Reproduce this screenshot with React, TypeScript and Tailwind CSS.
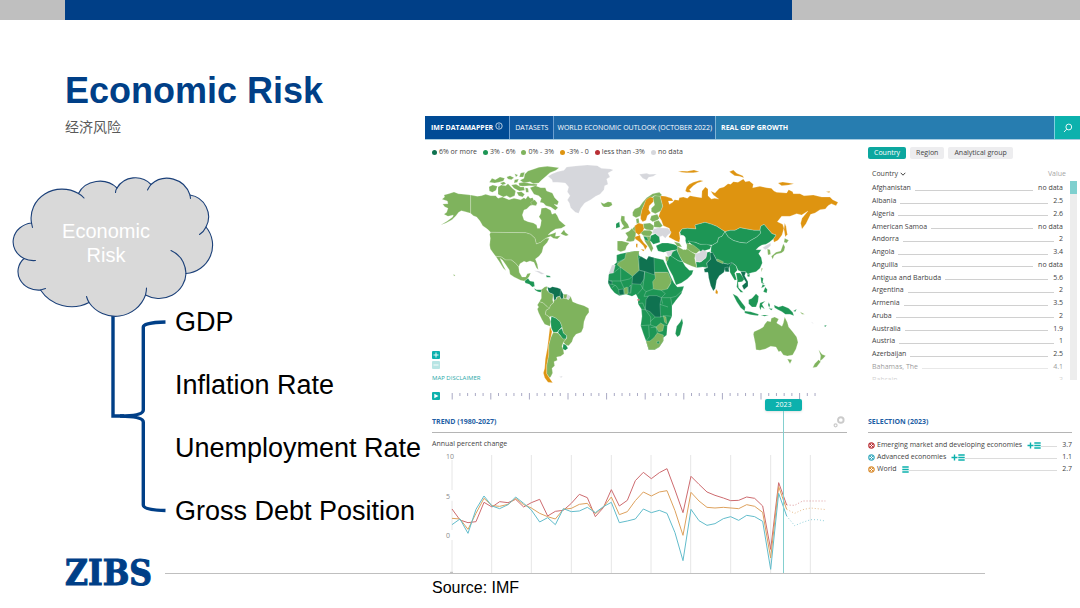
import React from "react";

const INDICATORS = ["GDP", "Inflation Rate", "Unemployment Rate", "Gross Debt Position"];

const LEGEND = [
  { label: "6% or more", dot: "bg-[#0f7250]" },
  { label: "3% - 6%", dot: "bg-[#1d9655]" },
  { label: "0% - 3%", dot: "bg-[#7fb35d]" },
  { label: "-3% - 0", dot: "bg-[#de9410]" },
  { label: "less than -3%", dot: "bg-[#b92f35]" },
  { label: "no data", dot: "bg-[#d6d7dc]" },
];

const COUNTRIES: [string, string][] = [
  ["Afghanistan", "no data"],
  ["Albania", "2.5"],
  ["Algeria", "2.6"],
  ["American Samoa", "no data"],
  ["Andorra", "2"],
  ["Angola", "3.4"],
  ["Anguilla", "no data"],
  ["Antigua and Barbuda", "5.6"],
  ["Argentina", "2"],
  ["Armenia", "3.5"],
  ["Aruba", "2"],
  ["Australia", "1.9"],
  ["Austria", "1"],
  ["Azerbaijan", "2.5"],
  ["Bahamas, The", "4.1"],
  ["Bahrain", "3"],
];

const SELECTION = [
  { name: "Emerging market and developing economies", value: "3.7", color: "#b92f35", plus: true },
  { name: "Advanced economies", value: "1.1", color: "#35a9bd", plus: true },
  { name: "World", value: "2.7", color: "#d98a2b", plus: false },
];

const DARK = "#0f7250";
const GREEN = "#1d9655";
const LIGHT = "#7fb35d";
const ORANGE = "#de9410";
const GREY = "#d6d7dc";

// [fill, outline] on a grid of three units per pixel
const AMERICAS: [string, string][] = [
  // Alaska
  [LIGHT, "90,111 103,116 120,118 140,120 140,175 124,170 112,167 104,172 96,182 84,194 66,204 50,210 70,198 86,186 88,180 72,184 60,178 68,172 72,160 62,155 56,147 72,146 70,138 54,133 62,126 60,120 74,116"],
  // Canada
  [LIGHT, "140,120 160,124 172,122 185,118 200,122 215,122 222,130 235,126 255,134 270,130 290,134 300,128 305,132 312,122 318,130 326,128 335,148 318,152 308,162 300,165 295,180 300,195 312,200 328,204 338,210 340,220 347,220 350,210 352,196 345,185 350,176 352,160 366,158 380,166 384,178 394,174 400,182 406,196 418,206 425,212 412,220 395,222 380,232 372,240 385,236 396,232 394,244 410,242 400,252 388,250 380,244 365,250 350,262 337,267 333,250 320,238 305,233 200,232 190,222 176,212 168,198 158,186 148,182 140,175"],
  // United States
  [LIGHT, "200,232 305,233 320,238 333,250 337,267 350,262 365,250 376,250 370,262 358,275 354,292 345,304 334,312 340,328 343,344 337,338 330,322 318,318 308,322 300,319 288,326 284,336 275,325 262,315 245,315 232,306 215,304 206,292 199,282 197,270 199,250 197,238"],
  // Mexico
  [LIGHT, "215,304 232,306 245,315 262,315 275,325 284,336 286,352 294,366 305,366 310,356 320,354 316,364 308,374 300,378 290,376 270,366 258,358 256,345 246,330 236,316 228,310 236,328 246,347 238,340 226,320"],
  [GREEN, "302,378 312,370 318,378 330,380 332,394 325,396 316,388 304,384"],
  [GREEN, "330,400 338,404 355,404 350,412 342,410 334,406"],
  [GREY, "330,347 345,348 362,357 352,358 340,351"],
  [GREEN, "366,361 378,363 380,367 368,367"],
  // Arctic islands
  [LIGHT, "302,58 312,48 330,42 345,37 370,34 405,38 396,46 378,53 366,64 352,76 344,84 328,86 318,80 300,84 288,76 300,70"],
  [LIGHT, "222,96 232,90 245,92 252,86 265,100 275,108 272,122 258,128 248,122 238,126 222,118"],
  [LIGHT, "195,95 206,90 220,94 216,106 205,112 196,108"],
  [LIGHT, "196,82 204,70 214,74 228,66 242,70 238,78 224,82 212,84"],
  [LIGHT, "248,66 258,62 270,68 262,74 252,72"],
  [LIGHT, "272,74 284,72 280,82 270,84"],
  [LIGHT, "228,84 240,80 246,86 236,90"],
  [LIGHT, "284,84 300,82 322,86 340,88 338,93 316,92 296,94 286,92"],
  [LIGHT, "262,90 276,88 290,96 300,96 302,106 286,108 270,100"],
  [LIGHT, "278,112 292,110 302,118 296,126 284,122"],
  [LIGHT, "304,98 312,100 314,112 306,112"],
  [LIGHT, "318,98 334,92 350,98 364,98 368,108 385,114 392,128 404,140 400,150 390,148 402,158 394,166 380,156 366,152 358,144 348,142 352,130 344,122 330,118"],
  [LIGHT, "320,142 332,134 340,144 336,152 324,150"],
  [LIGHT, "290,54 302,52 298,66 286,66"],
  [LIGHT, "272,56 282,60 276,66"],
  [LIGHT, "410,236 420,224 424,232 434,240 426,243 418,240"],
  // Greenland
  [GREY, "372,64 385,56 400,50 420,46 428,36 455,33 490,30 520,32 532,40 560,42 568,45 552,54 558,66 548,72 552,88 542,92 540,104 528,118 515,124 500,134 482,144 470,160 464,175 454,172 440,158 436,144 430,135 438,122 430,110 434,96 424,84 400,82 386,82 384,74"],
  // Iceland
  [LIGHT, "530,142 540,146 552,140 562,142 565,150 555,156 540,156 534,151"],
  // South America
  [LIGHT, "352,404 362,396 370,394 368,404 374,412 388,418 386,434 388,444 380,450 376,462 366,452 358,444 346,440 352,430"],
  [DARK, "370,396 378,399 385,395 400,398 410,402 414,414 408,424 398,426 396,434 390,436 388,418 374,412"],
  [DARK, "410,404 418,418 418,432 410,432 408,424"],
  [LIGHT, "418,418 430,418 428,432 420,430"],
  [GREY, "430,418 440,424 434,434 428,430"],
  [LIGHT, "390,436 396,434 400,426 408,424 410,432 420,430 428,432 434,434 440,424 446,440 460,446 480,452 494,460 495,472 486,484 480,500 478,518 472,532 456,538 448,548 444,560 434,572 426,570 418,562 428,550 428,542 418,534 414,516 408,500 396,490 384,484 376,486 364,478 366,466 376,460 380,450 388,444"],
  [LIGHT, "346,440 358,444 366,452 376,460 366,466 364,478 376,486 380,500 378,514 362,508 354,494 344,474 340,462 344,456 340,450"],
  [GREEN, "382,484 396,490 408,500 414,516 404,526 400,532 388,532 382,520 380,500"],
  [GREEN, "404,526 414,520 418,534 428,542 426,552 416,552 408,540 402,534"],
  [LIGHT, "388,532 402,534 410,544 418,552 426,552 418,562 414,574 418,584 420,596 410,604 398,606 400,616 390,620 392,632 384,640 386,654 380,666 376,668 368,656 368,630 374,600 374,570 380,548"],
  [GREEN, "418,566 426,570 432,580 424,586 416,582"],
  [ORANGE, "378,514 384,530 380,548 374,570 374,600 368,630 368,656 376,668 386,683 372,682 362,668 358,654 362,640 364,612 370,580 374,548"],
  [GREY, "406,665 416,663 412,668"],
  [LIGHT, "88,358 94,361 90,364"],
];

const EURASIA: [string, string][] = [
  // Russia
  [ORANGE, "180,122 196,124 215,130 220,138 205,138 208,148 218,142 224,134 236,136 238,128 250,126 262,130 270,122 290,126 305,128 306,108 316,96 324,102 324,122 334,132 344,130 356,132 340,120 332,108 345,114 358,100 372,96 384,86 392,88 400,80 414,82 430,72 436,80 448,78 460,88 458,98 480,94 500,98 514,100 522,108 530,112 560,114 566,104 578,110 580,116 600,116 612,122 640,120 665,126 690,126 698,134 714,142 708,152 694,146 684,152 676,162 660,164 645,174 632,178 626,190 618,206 606,222 602,205 606,190 624,168 605,180 590,176 570,184 545,184 532,200 548,208 552,220 546,240 534,256 522,262 520,252 528,240 516,236 504,222 492,208 482,214 480,226 462,226 440,222 420,218 405,226 390,226 375,230 350,214 335,208 315,202 300,206 285,210 288,222 262,220 246,222 238,232 240,250 238,262 228,258 206,246 212,236 208,220 190,212 184,196 176,184 180,172 188,154 184,138"],
  [ORANGE, "256,108 260,96 268,88 280,82 300,76 310,78 292,84 280,92 268,104 274,112 262,112"],
  [ORANGE, "234,50 246,48 262,49 282,45 298,50 280,53 258,53"],
  [ORANGE, "388,50 400,45 410,55 428,62 432,68 418,64 404,62 396,56"],
  [ORANGE, "534,84 548,81 582,86 566,90 545,92"],
  [ORANGE, "678,110 690,109 688,113"],
  [ORANGE, "554,204 558,214 562,238 556,246 552,224"],
  [GREY, "118,58 140,55 148,58 170,57 160,64 146,67 140,75 128,70"],
  // Central Asia
  [GREEN, "240,232 246,222 262,220 288,222 285,210 300,206 315,202 335,208 350,214 375,230 366,244 356,248 352,262 338,270 320,270 300,268 286,262 270,262 262,270 250,262 256,254 244,248"],
  [GREEN, "264,258 286,262 300,268 320,268 334,272 330,282 318,286 308,290 296,288 280,274"],
  [LIGHT, "260,264 280,270 300,286 288,296 276,292 260,282"],
  [GREEN, "375,230 385,246 400,256 420,262 440,264 452,256 470,246 482,234 480,226 482,214 492,208 504,222 516,236 528,240 520,252 508,262 498,268 486,270 476,276 468,284 484,284 476,296 484,308 487,324 480,340 468,350 452,354 444,358 436,350 424,350 414,346 408,332 396,324 384,328 368,324 350,316 342,300 332,290 334,272 352,262 356,248 366,244"],
  [GREEN, "375,230 390,226 405,226 420,218 440,222 462,226 480,226 482,234 470,246 452,256 440,264 420,262 400,256 385,246"],
  // South Asia
  [DARK, "326,294 338,292 344,304 350,316 368,324 384,328 396,322 402,328 388,336 384,352 376,340 372,352 358,362 350,376 346,400 340,408 332,392 326,368 324,352 314,352 312,342 322,338 320,324 332,312"],
  [DARK, "374,338 384,336 388,350 376,350"],
  [LIGHT, "352,312 370,320 368,326 350,318"],
  [GREEN, "288,320 300,322 318,308 320,292 330,290 332,312 320,324 322,338 308,336 290,338"],
  [GREY, "284,298 300,292 308,284 316,288 322,290 318,308 304,320 288,320"],
  [ORANGE, "348,402 354,410 352,418 346,414"],
  // Middle East
  [LIGHT, "230,272 240,278 250,284 262,282 276,292 286,298 284,310 290,338 276,334 262,328 250,322 240,306 232,290"],
  [GREEN, "168,272 186,264 204,264 222,268 232,272 232,284 210,288 190,292 174,288"],
  [LIGHT, "222,260 238,264 246,276 232,274"],
  [GREY, "198,290 220,286 218,298 204,306"],
  [GREEN, "218,290 230,284 240,306 248,320 236,318 212,304"],
  [GREEN, "200,308 212,302 236,318 248,320 256,334 268,346 280,346 276,358 262,372 244,384 228,390 218,362 208,344 200,326"],
  [LIGHT, "196,304 206,306 204,316 198,320"],
  // South-East Asia
  [GREEN, "388,334 396,324 408,332 412,346 404,354 410,374 404,376 398,366 390,352"],
  [GREEN, "408,354 420,354 434,372 426,380 414,382 416,398 430,412 422,412 410,396 412,376"],
  [DARK, "422,350 438,350 434,362 444,380 444,394 432,404 426,392 438,382 428,366"],
  [GREEN, "442,358 450,358 448,366 442,364"],
  [GREEN, "398,416 412,424 424,440 436,456 434,468 422,458 410,440"],
  [GREEN, "434,468 452,470 476,478 474,482 452,479 434,474"],
  [GREEN, "482,480 506,480 494,484"],
  [GREEN, "446,434 456,430 468,416 476,424 474,440 468,456 456,456 446,446"],
  [GREEN, "480,444 496,438 486,448 494,462 484,456 482,466 478,456"],
  [GREEN, "482,366 490,370 488,382 494,388 484,384"],
  [GREEN, "496,396 502,404 500,414 490,410"],
  [GREEN, "488,388 496,392 484,400"],
  [GREEN, "506,442 510,450 508,458 504,450"],
  [GREEN, "506,460 518,461 514,466"],
  [GREEN, "522,450 536,456 548,452 566,460 578,472 582,482 570,478 556,478 546,470 534,464 524,458"],
  [GREEN, "580,468 590,462 586,470"],
  [GREEN, "672,512 680,510 676,516"],
  [LIGHT, "600,470 614,478 606,478"],
  [GREY, "634,500 642,506 636,504"],
  [LIGHT, "484,340 488,340 484,352"],
  [GREY, "488,278 500,270 512,264 512,272 504,280 496,284"],
  [LIGHT, "502,282 510,284 512,298 504,300"],
  [LIGHT, "554,250 566,256 560,264 552,262"],
  [LIGHT, "550,266 555,276 552,288 544,294 530,297 522,302 518,313 514,304 528,292 542,288"],
  // Oceania
  [LIGHT, "460,538 462,530 480,522 490,516 494,508 502,498 512,500 514,490 524,486 536,492 530,504 546,514 550,504 554,486 562,502 566,516 578,530 590,546 594,562 588,582 578,600 562,603 550,600 542,588 536,590 528,576 512,574 496,582 480,586 468,584 466,566"],
  [LIGHT, "562,612 576,614 570,626"],
  [LIGHT, "656,584 666,598 677,602 668,612 660,618 662,602"],
  [LIGHT, "656,614 662,620 650,636 638,638 644,626"],
  // Europe
  [LIGHT, "98,172 104,162 118,156 128,142 140,128 158,116 178,112 186,120 178,126 164,122 150,130 138,138 132,150 126,164 122,182 108,188 98,182"],
  [LIGHT, "158,128 164,122 180,124 184,138 188,154 182,168 166,176 154,170 154,160 164,150"],
  [ORANGE, "122,182 126,164 132,150 138,134 150,126 160,128 160,140 148,152 146,164 152,174 142,182 138,196 128,200 122,192"],
  [LIGHT, "154,182 172,178 178,190 172,196 158,200 150,194"],
  [LIGHT, "108,192 116,190 118,204 110,206"],
  [LIGHT, "64,182 74,184 74,196 84,208 88,218 74,222 62,224 72,214 66,206 62,196"],
  [GREEN, "48,206 58,200 60,216 48,220"],
  [LIGHT, "76,234 88,228 96,220 108,232 106,248 102,258 90,260 78,258 84,246"],
  [LIGHT, "52,258 66,258 88,264 80,274 76,286 62,290 52,286"],
  [LIGHT, "98,220 106,212 108,230 100,226"],
  [ORANGE, "104,212 116,204 130,208 132,220 128,232 116,240 106,232"],
  [LIGHT, "130,206 150,204 162,212 160,226 140,224 132,220"],
  [LIGHT, "122,234 132,226 150,226 158,232 150,244 130,242"],
  [LIGHT, "132,244 150,244 152,262 160,280 154,292 146,276 134,258"],
  [GREEN, "130,244 140,246 146,258 136,256"],
  [ORANGE, "104,246 120,240 122,250 132,264 142,274 136,284 130,272 118,260 106,252"],
  [ORANGE, "122,282 134,284 130,289"],
  [ORANGE, "108,266 113,266 112,278 108,276"],
  [LIGHT, "162,200 176,196 188,212 180,218 162,216"],
  [GREY, "160,222 176,218 204,220 214,232 204,240 196,250 188,242 178,246 168,236 156,236"],
  [GREEN, "152,242 166,236 178,246 180,262 160,268 150,256"],
  // Africa
  [GREEN, "50,300 62,296 92,290 116,288 118,302 140,314 146,304 162,308 190,314 196,326 204,344 214,368 222,384 232,396 252,394 244,416 228,436 216,452 216,484 202,512 200,540 190,548 190,558 178,576 164,584 146,584 138,558 130,536 122,512 126,484 124,462 114,446 114,430 108,418 96,424 78,418 58,422 44,414 32,400 24,384 26,360 36,336 50,322"],
  [LIGHT, "52,330 54,324 74,312 78,294 104,288 118,288 114,304 118,346 98,364"],
  [DARK, "116,312 122,304 140,314 146,304 162,308 164,360 136,350 118,346"],
  [DARK, "98,364 118,346 134,350 132,372 122,388 96,386"],
  [LIGHT, "164,352 204,352 214,376 212,386 202,402 184,406 160,402 158,380 166,370"],
  [DARK, "138,434 146,422 170,422 184,428 180,448 182,486 166,486 150,470 136,464"],
  [GREY, "26,356 36,330 46,330 40,354"],
  [DARK, "24,376 36,378 36,388 26,386"],
  [DARK, "56,404 70,402 72,418 58,420"],
  [LIGHT, "72,400 82,396 84,416 74,418"],
  [DARK, "86,398 92,390 90,414 86,414"],
  [LIGHT, "138,558 150,558 162,548 172,534 190,540 190,558 178,576 164,584 146,584"],
  [GREEN, "170,560 178,558 178,566 172,566"],
  [LIGHT, "168,516 182,504 192,510 188,528 176,530"],
  [LIGHT, "190,482 198,486 200,506 194,502"],
  [GREEN, "246,490 249,504 240,540 232,546 226,536 230,514 240,502"],
  ["#d8666a", "112,432 118,432 118,437 112,437"],
];

const AFRICA_BORDERS =
  "M40 354L62 336V378H30M62 378L88 372 98 364M36 388L48 392 56 404M96 386L92 416M122 388L128 400 112 418M134 350L132 372 128 400 138 410 160 402M164 352L200 352M138 410L132 424 146 424M114 446L128 444 136 464H124M184 406L196 416 184 428 212 428 228 424 246 408M202 402L212 384M204 456L180 448M184 430L188 446M212 428L216 452M180 486L196 482 216 484M136 464L152 486V510L122 512M152 510L168 516M150 500L166 486M146 512L148 545 138 558M152 518L168 516 172 534M192 510L202 512M54 326L50 322 74 312M62 378L72 400M36 398L44 392";

const TREND = [
  {
    color: "#cd6a6e",
    line: "84,207 108,240 132,248 156,245 180,187 204,201 227,185 252,188 275,178 299,201 322,188 347,178 371,228 394,214 418,211 442,190 466,163 490,173 514,230 538,203 562,149 586,198 610,181 634,122 658,97 682,116 706,98 729,86 753,150 777,218 801,109 825,133 849,156 873,166 898,174 920,182 944,181 968,171 992,175 1016,198 1040,328 1064,128 1088,195",
    forecast: "1088,195 1112,196 1136,183 1160,183 1204,183",
  },
  {
    color: "#dda15c",
    line: "84,235 108,237 132,268 156,220 180,175 204,197 227,199 252,193 275,175 299,194 322,204 347,220 371,230 394,237 418,208 442,205 466,193 490,190 514,221 538,201 562,171 586,224 610,215 634,182 658,156 682,168 706,156 729,152 753,212 777,286 801,157 825,183 849,202 873,204 898,202 944,206 968,194 992,199 1016,217 1040,354 1064,140 1088,208",
    forecast: "1088,208 1112,220 1136,209 1160,204 1208,209",
  },
  {
    color: "#61bccb",
    line: "84,254 108,237 132,280 156,208 180,168 204,198 227,206 252,194 275,171 299,190 322,210 347,246 371,233 394,254 418,206 442,215 466,213 490,202 514,218 538,200 562,187 586,248 610,243 634,237 658,207 682,218 706,211 729,220 753,278 777,362 801,208 825,242 849,256 873,251 898,236 920,230 944,241 968,226 992,230 1016,244 1040,388 1064,160 1088,228",
    forecast: "1088,228 1112,257 1136,247 1160,239 1180,239 1204,243",
  },
];

const Cloud: React.FC = () => (
  <div className="relative mt-[35px]">
    <svg viewBox="0 172 215 135" className="block h-[135px] w-[215px] overflow-visible" aria-hidden="true">
      <g stroke="#1b4079" strokeWidth="1.1" strokeLinecap="round">
        <path
          fill="#d9d9d9"
          d="M31.5 223A31 29 0 0 1 78.500 193.500A23 20 0 0 1 117 188A21 20 0 0 1 151 184.500A24 24 0 0 1 190 195A22 22 0 0 1 206 227A29 28.500 0 0 1 186 273.500A27 26 0 0 1 145.500 295A32 32 0 0 1 89 302.500A37 36 0 0 1 40.500 290A20.500 18.500 0 0 1 24 258.500A21 19 0 0 1 31.500 223Z"
        />
        <path
          fill="none"
          d="M78.500 193.500Q82 195.500 84 198M117 188Q115.500 190 115.500 192.500M151 184.500Q149 187 147.500 190M190 195L190.500 198.500M206 227Q204 231.500 199.500 234.500M186 273.500Q185 257 171 250.500M145.500 295Q146.500 291 146.500 288M89 302.500Q87.500 300 86.500 296.500M40.500 290L45.500 288.500M24 258.500Q29 261 35.500 260.500M31.500 223L32.500 227.500"
        />
      </g>
    </svg>
    <p className="absolute left-[61px] top-[47px] w-[90px] text-center text-xl leading-6 text-white">
      Economic Risk
    </p>
  </div>
);

const Bracket: React.FC = () => (
  <svg viewBox="0 307 175 220" className="block h-[220px] w-[175px] shrink-0" aria-hidden="true">
    <g fill="none" stroke="#003f87" strokeWidth="3.400">
      <path d="M113 315V416H124" />
      <path d="M165.500 322Q143.300 322.500 143.300 327V410Q143.300 416 120 416Q143.300 416.500 143.300 422V505Q143.300 510 165.500 510.500" />
    </g>
  </svg>
);

const WorldMap: React.FC = () => (
  <svg viewBox="0 9 436 222" className="block w-full" role="img" aria-label="World map">
    <g transform="scale(.33333)" stroke="#ffffff" strokeOpacity=".5" strokeWidth="1.300" strokeLinejoin="round">
      {AMERICAS.map(([fill, points]) => (
        <polygon key={points} fill={fill} points={points} />
      ))}
      <g transform="translate(528 0)">
        {EURASIA.map(([fill, points]) => (
          <polygon key={points} fill={fill} points={points} />
        ))}
        <path d={AFRICA_BORDERS} fill="none" />
        {/* Caspian Sea */}
        <path d="M244 240Q260 242 256 256Q262 270 258 284Q246 280 246 264Q238 252 244 240Z" fill="#fff" />
      </g>
    </g>
  </svg>
);

const TrendChart: React.FC = () => (
  <svg viewBox="0 9 436 124" className="block w-full" role="img" aria-label="Annual percent change, 1980 to 2027">
    <g transform="scale(.33333)" fill="none">
      {[84, 203, 322, 442, 562, 681, 800, 920, 1040, 1159].map((x) => (
        <path key={x} d={`M${x} 45V399`} stroke="#e6e6e6" strokeWidth="3" />
      ))}
      <path d="M60 30h30v30h-30zM60 150h30v32h-30zM60 270h30v30h-30z" fill="#fff" />
      <path d="M78 397h9" stroke="#9a9a9a" strokeWidth="2" />
      {TREND.map((s) => (
        <g key={s.color} stroke={s.color} strokeWidth="3">
          <polyline points={s.line} />
          <polyline points={s.forecast} strokeDasharray="3 6" opacity=".7" />
        </g>
      ))}
    </g>
    <g className="fill-[#8a8a8a] text-[7px]" textAnchor="end">
      <text x="30" y="19">10</text>
      <text x="26" y="59">5</text>
      <text x="26" y="98">0</text>
    </g>
  </svg>
);

const Timeline: React.FC = () => (
  <div className="flex h-5 items-center pl-2">
    <button
      type="button"
      aria-label="Play"
      className="flex h-2 w-2 items-center justify-center rounded-[1px] bg-[#0cb1ad]"
    >
      <svg viewBox="0 0 8 8" className="h-2 w-2" fill="#fff" aria-hidden="true">
        <path d="M2.300 1.700L6.500 4 2.300 6.300z" />
      </svg>
    </button>
    <div className="relative flex-1">
      <svg viewBox="0 0 420 8" className="block w-full" aria-hidden="true">
        {Array.from({ length: 48 }, (_, i) => (
          <path
            key={i}
            d={`M${12.2 + i * 7.72} 1v${i % 5 === 0 ? 6.5 : 3}`}
            stroke="#a9a9c4"
            strokeWidth="1"
          />
        ))}
      </svg>
      <input
        type="range"
        aria-label="Year"
        min={1980}
        max={2027}
        defaultValue={2023}
        className="absolute inset-0 w-full cursor-pointer opacity-0"
      />
    </div>
  </div>
);

const SelectionItem: React.FC<{ item: (typeof SELECTION)[number] }> = ({ item }) => (
  <li className="flex h-3 items-center">
    <svg viewBox="0 0 7 7" className="h-[7px] w-[7px] shrink-0" fill="none" stroke={item.color} aria-hidden="true">
      <circle cx="3.500" cy="3.500" r="2.700" strokeWidth="1.200" />
      <path d="M1.700 1.700l3.600 3.600m0-3.600l-3.600 3.600" />
    </svg>
    <span className="ml-0.5 whitespace-nowrap">{item.name}</span>
    <span className="ml-[5px] flex shrink-0 items-center">
      {item.plus && (
        <svg viewBox="0 0 7 7" className="h-[7px] w-[7px]" stroke="#0cb1ad" strokeWidth="1.400" aria-hidden="true">
          <path d="M.5 3.500h6M3.500 .5v6" />
        </svg>
      )}
      <svg viewBox="0 0 7 7" className="h-[7px] w-[7px]" stroke="#0cb1ad" strokeWidth="1.300" aria-hidden="true">
        <path d="M.3 1h6.400M.3 3.500h6.400M.3 6h6.400" />
      </svg>
    </span>
    <span className="mt-0.5 flex-1 border-b border-[#dcdcdc]" />
    <span className="ml-[5px]">{item.value}</span>
  </li>
);

const CountryList: React.FC = () => (
  <div className="pl-2">
    <div className="flex gap-1 pt-[7px]">
      <button type="button" className="h-3 rounded-[2px] bg-[#0ca79f] px-1.5 leading-3 text-white">
        Country
      </button>
      <button type="button" className="h-3 rounded-[2px] bg-[#ededef] px-1.5 leading-3">
        Region
      </button>
      <button type="button" className="h-3 rounded-[2px] bg-[#ededef] px-1.5 leading-3">
        Analytical group
      </button>
    </div>
    <div className="relative mt-[7px] flex h-[214px] overflow-hidden">
      <table className="h-[220px] flex-1 border-collapse">
        <thead>
          <tr>
            <th className="h-4 p-0 pl-1 text-left align-middle font-normal">
              <span className="flex items-center gap-0.5">
                Country
                <svg viewBox="0 0 6 6" className="h-1.5 w-1.5" fill="none" stroke="#444" aria-hidden="true">
                  <path d="M.7 1.800L3 4.200 5.300 1.800" />
                </svg>
              </span>
            </th>
            <th className="h-4 p-0 pr-1 text-right font-normal text-[#a5a5a5]">Value</th>
          </tr>
        </thead>
        <tbody>
          {COUNTRIES.map(([name, value]) => (
            <tr key={name}>
              <td colSpan={2} className="p-0 pl-1 pr-[7px]">
                <div className="flex items-center">
                  <span>{name}</span>
                  <span className="ml-1 mr-[5px] mt-1 flex-1 border-b border-[#d0d0d0]" />
                  <span>{value}</span>
                </div>
              </td>
            </tr>
          ))}
        </tbody>
      </table>
      <div className="mr-[3px] mt-[15px] h-[199px] w-[7px] bg-[#ededed]">
        <div className="h-[13px] bg-[#7fd0cf]" />
      </div>
      <div className="absolute bottom-0 left-0 right-[10px] h-5 bg-linear-to-t from-white/80 to-white/30" />
    </div>
  </div>
);

const App: React.FC = () => {
  return (
    <div className="min-h-screen bg-white font-['Liberation_Sans',Arial,sans-serif] text-black">
      <div className="flex h-5 bg-[#bfbfbf]">
        <div className="ml-[65px] mr-[26.7%] flex-1 bg-[#003f87]" />
      </div>

      <div className="flex">
        <section className="w-[424px] shrink-0 pt-[53px]">
          <header className="pl-[65px]">
            <h1 className="text-4xl font-bold leading-9 text-[#003f87]">Economic Risk</h1>
            <p
              lang="zh-CN"
              className="mt-2 font-['Liberation_Sans','Noto_Sans_CJK_SC',sans-serif] text-sm leading-5 text-[#595959]"
            >
              经济风险
            </p>
          </header>
          <Cloud />
          <div className="flex">
            <Bracket />
            <ul className="flex flex-col gap-[33px] whitespace-nowrap text-[27px] leading-[30px]">
              {INDICATORS.map((name) => (
                <li key={name}>{name}</li>
              ))}
            </ul>
          </div>
          <div className="mt-8 flex h-7 items-center pl-[65px]">
            <div className="w-[100px] font-['DejaVu_Serif_Condensed','DejaVu_Serif',serif] text-[35px] font-bold leading-7 text-[#003f87] [-webkit-text-stroke:1px_#003f87]">
              ZIBS
            </div>
            <div className="flex-1 border-t border-[#bfbfbf]" />
          </div>
        </section>

        <section className="mt-24 min-w-0 flex-1">
          <div className="font-['Open_Sans',sans-serif] text-[7px] leading-[10px] text-[#444]">
            <nav className="ml-px flex h-6 items-stretch whitespace-nowrap border-b border-[#a9cde0] text-white">
              <a href="#home" className="flex items-center gap-0.5 border-r border-[#6c9fd0] bg-[#004b95] px-1.5 font-bold">
                IMF DATAMAPPER
                <svg viewBox="0 0 8 8" className="mb-1 h-2 w-2" fill="none" stroke="#fff" strokeWidth=".7" aria-hidden="true">
                  <circle cx="4" cy="4" r="3.200" />
                  <path d="M4 3.500v2.300M4 2v.8" />
                </svg>
              </a>
              <a href="#datasets" className="flex items-center border-r border-[#6c9fd0] bg-[#1059a0] px-[5px]">
                DATASETS
              </a>
              <a href="#weo" className="flex items-center border-r border-[#7fb4d6] bg-[#1d68a8] px-[3px]">
                WORLD ECONOMIC OUTLOOK (OCTOBER 2022)
              </a>
              <a href="#gdp" className="flex flex-1 items-center bg-[#277db0] px-[5px] font-bold">
                REAL GDP GROWTH
              </a>
              <button
                type="button"
                aria-label="Search"
                className="flex w-[26px] items-center justify-center border-l border-[#7fcfe0] bg-[#0cb1ad]"
              >
                <svg viewBox="0 0 10 10" className="h-2.5 w-2.5" fill="none" stroke="#fff" strokeWidth=".9" aria-hidden="true">
                  <circle cx="5.800" cy="4" r="2.900" />
                  <path d="M3.700 6.200L1 9" />
                </svg>
              </button>
            </nav>

            <div className="grid grid-cols-[1fr_220px]">
              <div>
                <ul className="flex h-6 items-center gap-1.5 whitespace-nowrap pl-2">
                  {LEGEND.map((item) => (
                    <li key={item.label} className="flex items-center gap-0.5">
                      <span className={`h-[5px] w-[5px] rounded-full ${item.dot}`} />
                      {item.label}
                    </li>
                  ))}
                </ul>
                <div className="relative">
                  <WorldMap />
                  <div className="absolute bottom-[3px] left-2 flex flex-col gap-0.5 text-[6px] text-[#2aa9a9]">
                    <button type="button" aria-label="Zoom in" className="flex h-2 w-2 rounded-[1px] bg-[#0cb1ad]">
                      <svg viewBox="0 0 8 8" className="h-2 w-2" stroke="#fff" strokeWidth=".9" aria-hidden="true">
                        <path d="M1.500 4h5M4 1.500v5" />
                      </svg>
                    </button>
                    <button type="button" aria-label="Zoom out" className="flex h-2 w-2 rounded-[1px] bg-[#b8e5e4]">
                      <svg viewBox="0 0 8 8" className="h-2 w-2" stroke="#fff" strokeWidth=".9" aria-hidden="true">
                        <path d="M1.500 4h5" />
                      </svg>
                    </button>
                    <a href="#disclaimer" className="whitespace-nowrap pt-0.5">
                      MAP DISCLAIMER
                    </a>
                  </div>
                </div>
              </div>

              <CountryList />

              <div className="relative">
                <Timeline />
                <div className="ml-2 mr-[13px] flex h-[27px] items-center justify-between border-b border-[#b5b5b5] pr-0.5 pt-1.5">
                  <h2 className="font-bold text-[#1f5fa5]">TREND (1980-2027)</h2>
                  <svg viewBox="0 0 12 12" className="h-3 w-3" fill="none" stroke="#cbcbcb" aria-hidden="true">
                    <circle cx="7.800" cy="4" r="2.800" strokeWidth="1.900" />
                    <circle cx="2.600" cy="9.300" r="1.500" strokeWidth="1.200" />
                  </svg>
                </div>
                <p className="h-4 pl-2 pt-1.5">Annual percent change</p>
                <TrendChart />
                <div className="absolute bottom-0 left-[341px] top-[13px] flex w-[37px] flex-col items-center">
                  <output className="h-3 w-full rounded-[2px] bg-[#0cb1ad] text-center leading-3 text-white shadow-sm">
                    2023
                  </output>
                  <div className="w-px flex-1 bg-[#84cfcf]" />
                </div>
              </div>

              <div className="pl-2 pr-2 pt-5">
                <h2 className="flex h-[27px] items-center border-b border-[#b5b5b5] pt-1.5 font-bold text-[#1f5fa5]">
                  SELECTION (2023)
                </h2>
                <ul className="pt-1.5">
                  {SELECTION.map((item) => (
                    <SelectionItem key={item.name} item={item} />
                  ))}
                </ul>
              </div>
            </div>
          </div>

          <div className="mr-[95px] border-t border-[#bfbfbf]" />
          <p className="mt-0.5 px-2 text-base leading-6">Source: IMF</p>
        </section>
      </div>
    </div>
  );
};

export default App;
